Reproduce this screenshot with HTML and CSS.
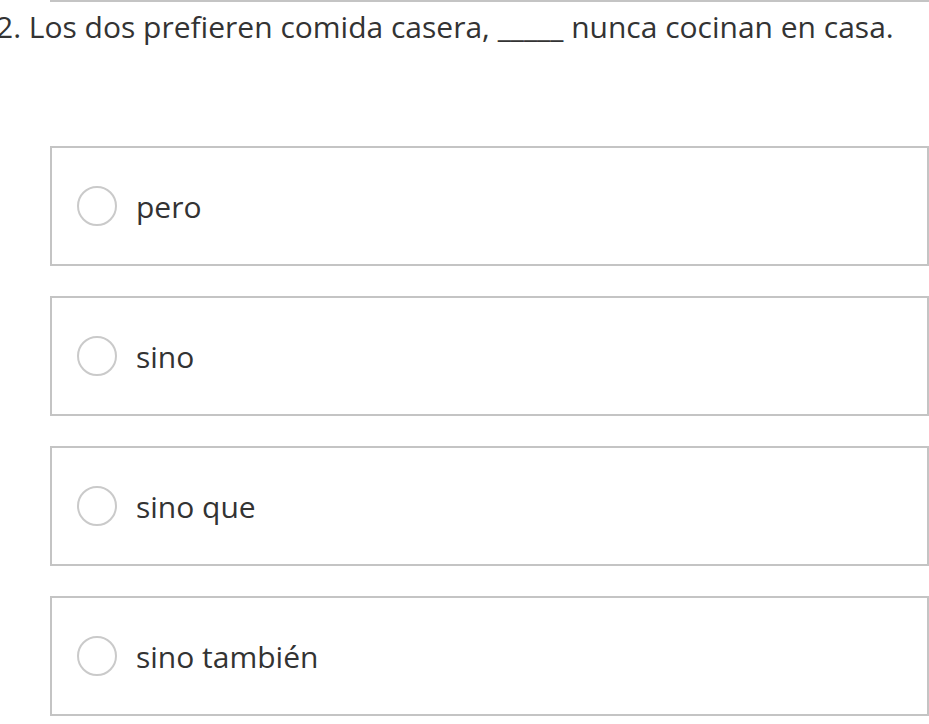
FILE: index.html
```html
<!DOCTYPE html>
<html lang="es">
<head>
<meta charset="utf-8">
<link rel="stylesheet" href="styles.css">
</head>
<body>
<div class="page">
  <div class="rule"></div>
  <p class="question">2. Los dos prefieren comida casera, _____ nunca cocinan en casa.</p>
  <div class="options">
    <label class="option"><span class="radio"></span><span class="label">pero</span></label>
    <label class="option"><span class="radio"></span><span class="label">sino</span></label>
    <label class="option"><span class="radio"></span><span class="label">sino que</span></label>
    <label class="option"><span class="radio"></span><span class="label">sino también</span></label>
  </div>
</div>
</body>
</html>
```
FILE: styles.css
```css
html, body {
  margin: 0;
  padding: 0;
  background: #ffffff;
}
body {
  font-family: "Open Sans", "Noto Sans", sans-serif;
  color: #333333;
  overflow: hidden;
}
.page {
  width: 929px;
  height: 724px;
}
.rule {
  margin-left: 50px;
  height: 2px;
  background: #c4c4c4;
}
.question {
  margin: 0 0 0 -4px;
  font-size: 30px;
  line-height: 50px;
  white-space: nowrap;
}
.options {
  display: flex;
  flex-direction: column;
  gap: 30px;
  margin: 94px 0 0 50px;
}
.option {
  display: flex;
  align-items: center;
  gap: 19px;
  padding-left: 25px;
  border: 2px solid #c4c4c4;
  width: 879px;
  box-sizing: border-box;
  height: 120px;
}
.radio {
  width: 40px;
  height: 40px;
  border: 2px solid #cacaca;
  border-radius: 50%;
  box-sizing: border-box;
  flex: none;
}
.label {
  font-size: 30px;
}
```
